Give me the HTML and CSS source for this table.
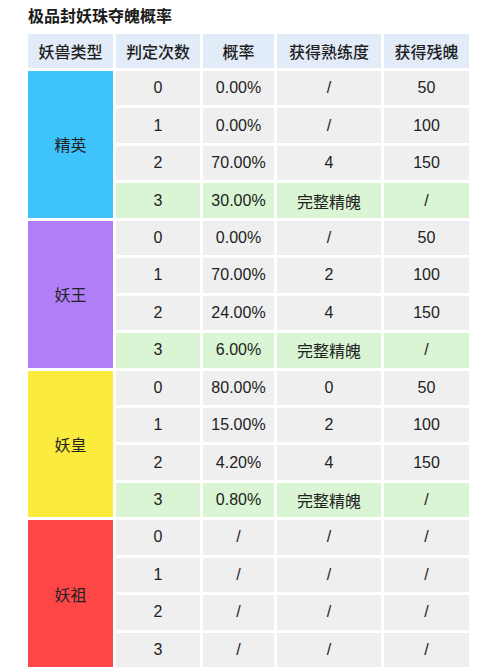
FILE: index.html
```html
<!DOCTYPE html>
<html lang="zh">
<head>
<meta charset="utf-8">
<link rel="stylesheet" href="styles.css">
</head>
<body>
<div class="page">
  <h1 class="title">极品封妖珠夺魄概率</h1>
  <div class="table">
    <div class="hd">妖兽类型</div><div class="hd">判定次数</div><div class="hd">概率</div><div class="hd">获得熟练度</div><div class="hd">获得残魄</div>

    <div class="cat blue">精英</div>
    <div class="c">0</div><div class="c">0.00%</div><div class="c">/</div><div class="c">50</div>
    <div class="c">1</div><div class="c">0.00%</div><div class="c">/</div><div class="c">100</div>
    <div class="c">2</div><div class="c">70.00%</div><div class="c">4</div><div class="c">150</div>
    <div class="c g">3</div><div class="c g">30.00%</div><div class="c g">完整精魄</div><div class="c g">/</div>

    <div class="cat purple">妖王</div>
    <div class="c">0</div><div class="c">0.00%</div><div class="c">/</div><div class="c">50</div>
    <div class="c">1</div><div class="c">70.00%</div><div class="c">2</div><div class="c">100</div>
    <div class="c">2</div><div class="c">24.00%</div><div class="c">4</div><div class="c">150</div>
    <div class="c g">3</div><div class="c g">6.00%</div><div class="c g">完整精魄</div><div class="c g">/</div>

    <div class="cat yellow">妖皇</div>
    <div class="c">0</div><div class="c">80.00%</div><div class="c">0</div><div class="c">50</div>
    <div class="c">1</div><div class="c">15.00%</div><div class="c">2</div><div class="c">100</div>
    <div class="c">2</div><div class="c">4.20%</div><div class="c">4</div><div class="c">150</div>
    <div class="c g">3</div><div class="c g">0.80%</div><div class="c g">完整精魄</div><div class="c g">/</div>

    <div class="cat red">妖祖</div>
    <div class="c">0</div><div class="c">/</div><div class="c">/</div><div class="c">/</div>
    <div class="c">1</div><div class="c">/</div><div class="c">/</div><div class="c">/</div>
    <div class="c">2</div><div class="c">/</div><div class="c">/</div><div class="c">/</div>
    <div class="c">3</div><div class="c">/</div><div class="c">/</div><div class="c">/</div>
  </div>
</div>
</body>
</html>
```

FILE: styles.css
```css
html, body {
  margin: 0;
  padding: 0;
  background: #ffffff;
}
body {
  font-family: "Liberation Sans", "Noto Sans CJK SC", sans-serif;
  color: #222222;
}
.page {
  padding: 5px 0 0 28px;
}
.title {
  margin: 0 0 9px 0;
  font-size: 16px;
  line-height: 20px;
  font-weight: 700;
  font-family: "Noto Sans CJK SC", sans-serif;
  color: #1a1a1a;
}
.table {
  display: grid;
  grid-template-columns: 85px 84px 71px 104px 85px;
  grid-template-rows: 34px repeat(16, 34.44px);
  gap: 3px;
  font-size: 16px;
}
.table > div {
  display: flex;
  align-items: center;
  justify-content: center;
  white-space: nowrap;
}
.hd {
  background: #e2ecf9;
  font-family: "Noto Sans CJK SC", sans-serif;
  font-weight: 500;
  font-size: 16px;
  color: #1f1f1f;
}
.c {
  background: #efefef;
}
.c.g {
  background: #d9f5d3;
}
.cat {
  grid-row: span 4;
  font-family: "Noto Sans CJK SC", sans-serif;
  color: #222222;
}
.blue { background: #3ec3fb; }
.purple { background: #b07ff8; }
.yellow { background: #fbeb3c; }
.red { background: #fd4747; }
```
